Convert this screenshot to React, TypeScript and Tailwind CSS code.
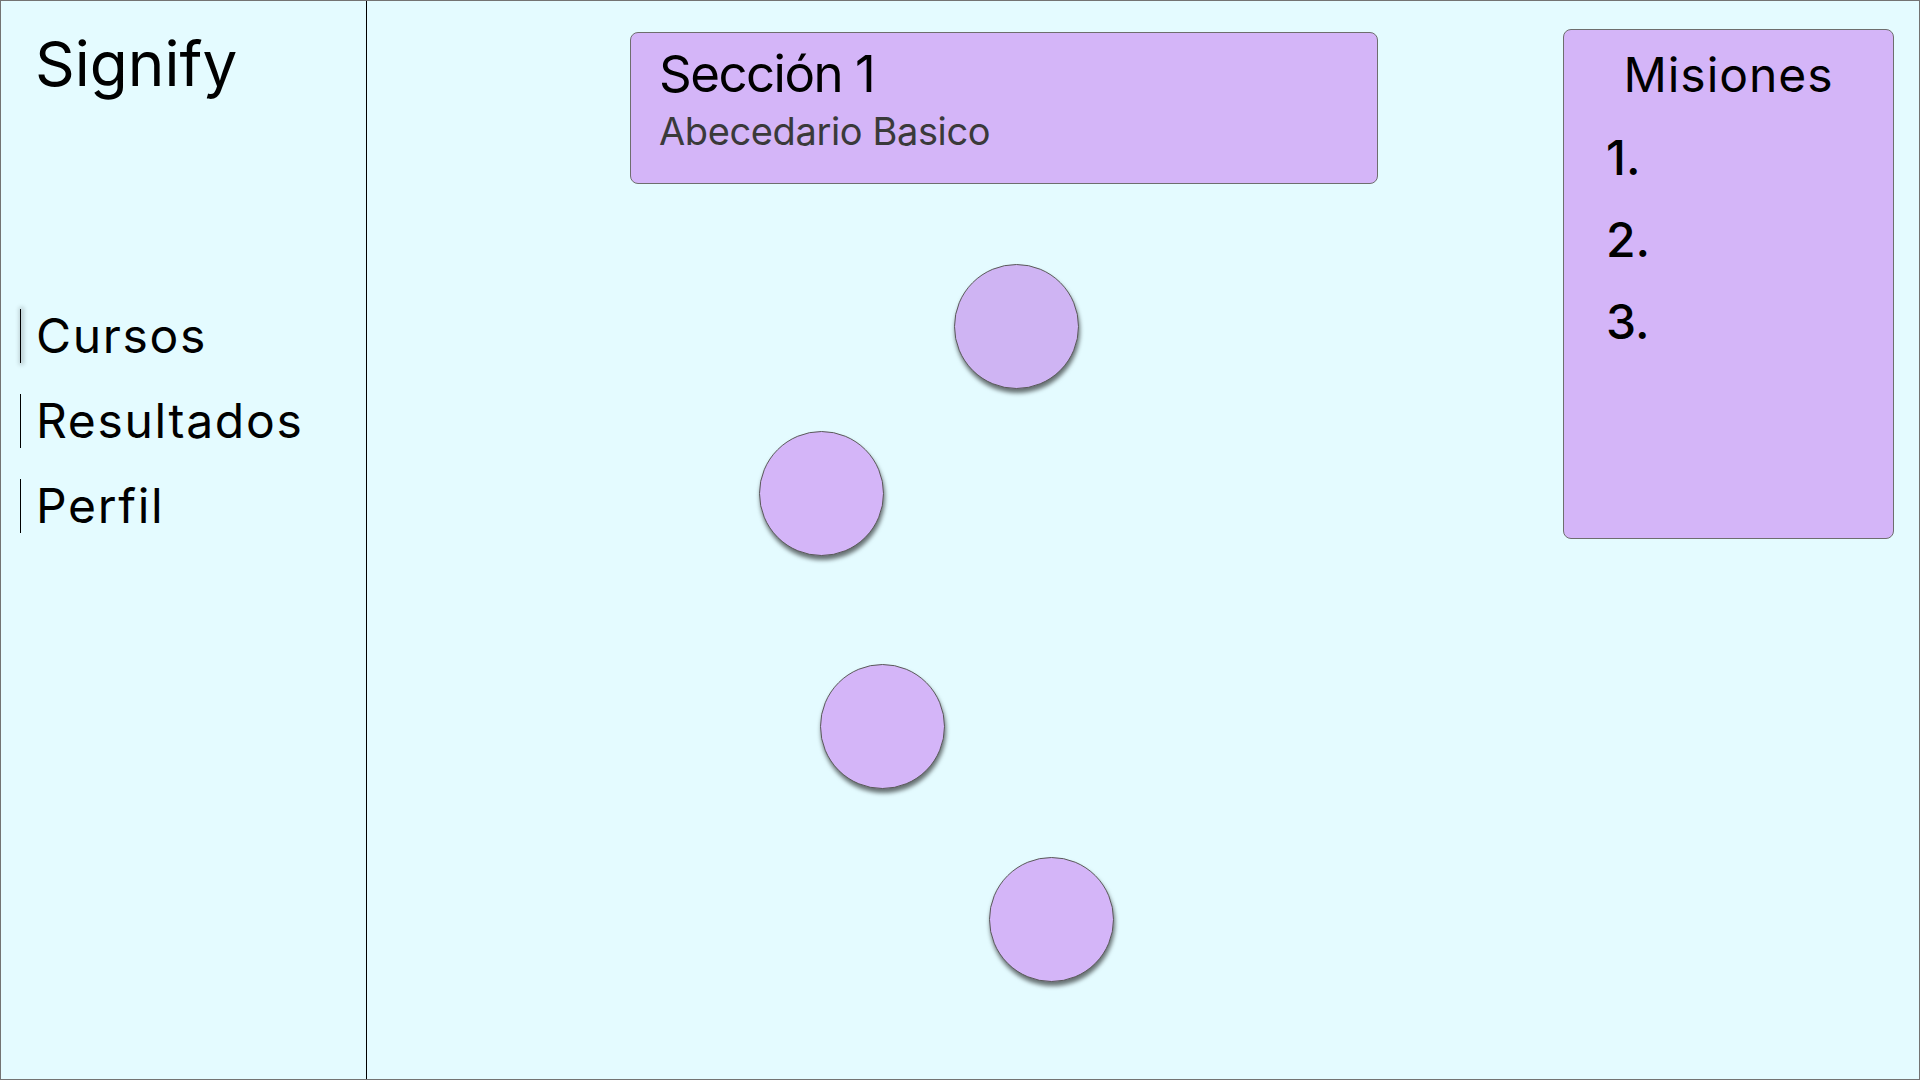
import React from "react";

const nav = [
  { label: "Cursos", active: true },
  { label: "Resultados", active: false },
  { label: "Perfil", active: false },
];

const nodes = [
  { mt: "mt-[80px]", ml: "ml-[324px]", bg: "bg-[#cfb4f3]" },
  { mt: "mt-[42px]", ml: "ml-[129px]", bg: "bg-[#d4b5f8]" },
  { mt: "mt-[108px]", ml: "ml-[190px]", bg: "bg-[#d4b5f8]" },
  { mt: "mt-[68px]", ml: "ml-[359px]", bg: "bg-[#d4b5f8]" },
];

export default function App() {
  return (
    <div className="w-screen h-screen overflow-hidden border border-[#737373] bg-[#e4fbff] flex font-['Inter',sans-serif] text-black">
      <aside className="w-[366px] shrink-0 h-full border-r border-black flex flex-col">
        <h1 className="ml-[34px] mt-[32px] text-[62px] leading-none font-normal">Signify</h1>
        <nav className="mt-[214px] ml-[19px] flex flex-col gap-[31px]">
          {nav.map((n) => (
            <div key={n.label} className="flex items-stretch h-[54px]">
              <div
                className={
                  n.active
                    ? "w-px bg-black shadow-[1px_0_4px_2px_rgba(0,0,0,0.18)]"
                    : "w-px bg-black"
                }
              />
              <span className="pl-[15px] pt-[3px] text-[48px] leading-none tracking-[0.035em]">
                {n.label}
              </span>
            </div>
          ))}
        </nav>
      </aside>

      <main className="flex-1 flex">
        <div className="pl-[263px] flex flex-col">
          <section className="mt-[31px] w-[748px] h-[152px] rounded-lg border border-[#6e6e6e] bg-[#d4b5f8] pl-[28px] pt-[15px]">
            <h2 className="text-[51px] leading-none font-normal tracking-[-0.03em]">Sección 1</h2>
            <p className="mt-[13px] text-[38px] leading-none text-[#3a3a3a] tracking-[-0.01em]">
              Abecedario Basico
            </p>
          </section>
          {nodes.map((c, i) => (
            <button
              key={i}
              className={`${c.mt} ${c.ml} w-[125px] h-[125px] rounded-full border border-[#5a5a5a] ${c.bg} shadow-[1px_4px_4px_rgba(0,0,0,0.55)] shrink-0`}
            />
          ))}
        </div>

        <aside className="ml-auto mr-[25px] mt-[28px] w-[331px] h-[510px] rounded-lg border border-[#6e6e6e] bg-[#d4b5f8] pt-[21px] flex flex-col">
          <h3 className="text-center text-[48px] leading-none font-normal tracking-[0.02em]">Misiones</h3>
          <div className="mt-[35px] pl-[42px] flex flex-col gap-[34px] text-[48px] leading-none font-medium">
            <span>1.</span>
            <span>2.</span>
            <span>3.</span>
          </div>
        </aside>
      </main>
    </div>
  );
}
